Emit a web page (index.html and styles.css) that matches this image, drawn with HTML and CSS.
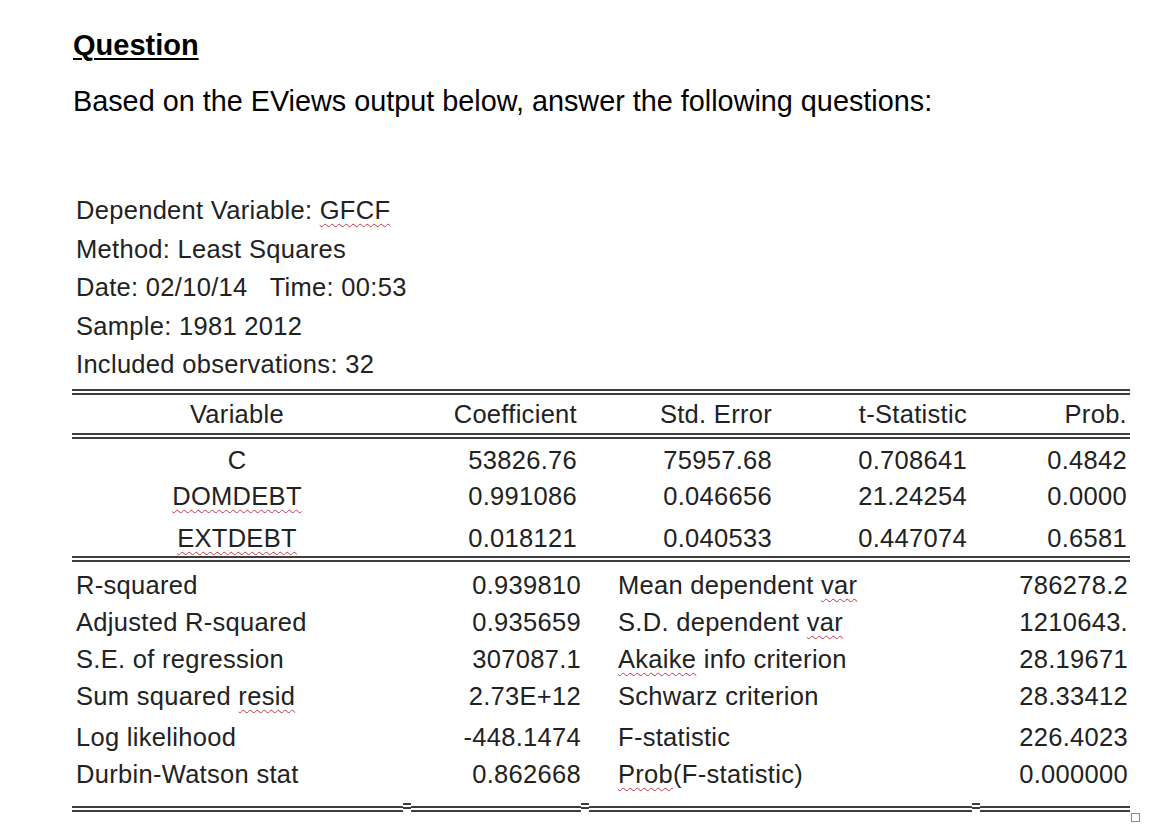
FILE: index.html
```html
<!DOCTYPE html>
<html>
<head>
<meta charset="utf-8">
<link rel="stylesheet" href="styles.css">
</head>
<body>
<div class="page">
  <h1 class="q-title">Question</h1>
  <p class="q-text">Based on the EViews output below, answer the following questions:</p>

  <div class="output">
    <div class="meta">
      <div>Dependent Variable: <span class="sp">GFCF</span></div>
      <div>Method: Least Squares</div>
      <div>Date: 02/10/14&nbsp;&nbsp;&nbsp;Time: 00:53</div>
      <div>Sample: 1981 2012</div>
      <div>Included observations: 32</div>
    </div>

    <div class="table">
      <div class="coef-row head">
        <span class="c-var">Variable</span>
        <span class="num">Coefficient</span>
        <span class="num">Std. Error</span>
        <span class="num">t-Statistic</span>
        <span class="num">Prob.</span>
      </div>
      <div class="coef-body">
        <div class="coef-row">
          <span class="c-var">C</span>
          <span class="num">53826.76</span>
          <span class="num">75957.68</span>
          <span class="num">0.708641</span>
          <span class="num">0.4842</span>
        </div>
        <div class="coef-row">
          <span class="c-var"><span class="sp">DOMDEBT</span></span>
          <span class="num">0.991086</span>
          <span class="num">0.046656</span>
          <span class="num">21.24254</span>
          <span class="num">0.0000</span>
        </div>
        <div class="coef-row spaced">
          <span class="c-var"><span class="sp">EXTDEBT</span></span>
          <span class="num">0.018121</span>
          <span class="num">0.040533</span>
          <span class="num">0.447074</span>
          <span class="num">0.6581</span>
        </div>
      </div>
      <div class="stats">
        <div class="stat-row">
          <span>R-squared</span><span class="num">0.939810</span>
          <span>Mean dependent <span class="sp">var</span></span><span class="num">786278.2</span>
        </div>
        <div class="stat-row">
          <span>Adjusted R-squared</span><span class="num">0.935659</span>
          <span>S.D. dependent <span class="sp">var</span></span><span class="num">1210643.</span>
        </div>
        <div class="stat-row">
          <span>S.E. of regression</span><span class="num">307087.1</span>
          <span><span class="sp">Akaike</span> info criterion</span><span class="num">28.19671</span>
        </div>
        <div class="stat-row">
          <span>Sum squared <span class="sp">resid</span></span><span class="num">2.73E+12</span>
          <span>Schwarz criterion</span><span class="num">28.33412</span>
        </div>
        <div class="stat-row spaced">
          <span>Log likelihood</span><span class="num">-448.1474</span>
          <span>F-statistic</span><span class="num">226.4023</span>
        </div>
        <div class="stat-row">
          <span>Durbin-Watson stat</span><span class="num">0.862668</span>
          <span><span class="sp">Prob</span>(F-statistic)</span><span class="num">0.000000</span>
        </div>
      </div>
      <div class="end-rule">
        <span class="mark m1"></span>
        <span class="mark m2"></span>
        <span class="mark m3"></span>
        <span class="handle"></span>
      </div>
    </div>
  </div>
</div>
</body>
</html>
```

FILE: styles.css
```css
html, body {
  margin: 0;
  padding: 0;
  background: #ffffff;
}

.page {
  width: 1158px;
  height: 831px;
  overflow: hidden;
  font-family: "Liberation Sans", Arial, sans-serif;
  color: #000;
}

.q-title {
  margin: 0;
  padding: 28px 0 0 73px;
  font-size: 29px;
  line-height: 34px;
  font-weight: bold;
  text-decoration: underline;
  text-decoration-thickness: 2px;
  text-underline-offset: 3px;
}

.q-text {
  margin: 0;
  padding: 22px 0 0 73px;
  font-size: 28.8px;
  line-height: 34px;
}

.output {
  margin: 73px 0 0 72px;
  width: 1058px;
  color: #222;
  font-size: 25.5px;
  letter-spacing: 0.3px;
}

.meta {
  padding-left: 4px;
  line-height: 38.5px;
}

.sp {
  text-decoration: underline wavy #c0394b;
  text-decoration-thickness: 1px;
  text-underline-offset: 4px;
  text-decoration-skip-ink: none;
}

.table {
  position: relative;
  margin-top: 5px;
  border-top: 6px double #3e3e3e;
}

.coef-row {
  display: grid;
  grid-template-columns: 330px 175px 195px 195px 160px;
  padding-right: 3px;
  height: 36px;
  line-height: 36px;
  white-space: nowrap;
}

.coef-row.head {
  height: 38px;
  line-height: 38px;
  border-bottom: 6px double #3e3e3e;
}

.coef-body {
  padding-top: 3px;
  border-bottom: 6px double #3e3e3e;
}

.coef-row.spaced {
  margin-top: 6px;
}

.c-var {
  text-align: center;
}

.num {
  text-align: right;
}

.stats {
  padding-top: 5px;
  padding-bottom: 13px;
}

.stat-row {
  display: grid;
  grid-template-columns: 378px 127px 403px 147px;
  padding-left: 4px;
  height: 37px;
  line-height: 37px;
  white-space: nowrap;
}

.stat-row > span:nth-child(3) {
  padding-left: 37px;
}

.stat-row.spaced {
  margin-top: 4px;
}

.stat-row > .num:last-child {
  padding-right: 3px;
}

.end-rule {
  position: relative;
  height: 0;
  border-top: 6px double #3e3e3e;
}

.mark {
  position: absolute;
  top: -9px;
  width: 8px;
  height: 12px;
  background: #fff;
}

.mark::before {
  content: "";
  position: absolute;
  left: 0;
  top: 0;
  width: 8px;
  height: 2px;
  border-top: 2px solid #3e3e3e;
  border-bottom: 2px solid #3e3e3e;
}

.m1 { left: 331px; }
.m2 { left: 509px; }
.m3 { left: 900px; }

.handle {
  position: absolute;
  left: 1059px;
  top: 1px;
  width: 7px;
  height: 7px;
  border: 1px solid #888;
  background: #fff;
}
```
